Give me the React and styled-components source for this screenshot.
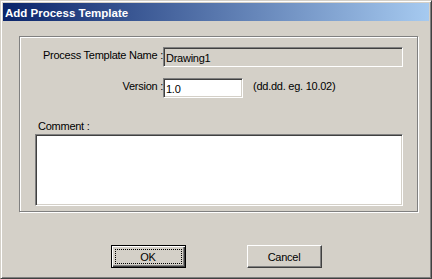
import React from "react";
import styled, { createGlobalStyle, css } from "styled-components";

const GlobalStyle = createGlobalStyle`
  html, body {
    margin: 0;
    padding: 0;
    background: #d4d0c8;
  }
  body {
    font-family: "Liberation Sans", Arial, sans-serif;
    font-size: 11px;
    letter-spacing: -0.25px;
    color: #000;
  }
`;

const sunken = css`
  box-sizing: border-box;
  border: 1px solid;
  border-color: #808080 #fff #fff #808080;
  box-shadow: inset 1px 1px #404040, inset -1px -1px #d4d0c8;
  outline: none;
  margin: 0;
  font-family: "Liberation Sans", Arial, sans-serif;
  font-size: 11px;
  letter-spacing: -0.25px;
  color: #000;
`;

const Window = styled.div`
  box-sizing: border-box;
  width: 432px;
  height: 279px;
  padding: 2px;
  background: #d4d0c8;
  border: 1px solid;
  border-color: #d4d0c8 #404040 #404040 #d4d0c8;
  box-shadow: inset 1px 1px #fff, inset -1px -1px #808080;
  display: flex;
  flex-direction: column;
`;

const TitleBar = styled.div`
  height: 18px;
  box-sizing: border-box;
  padding: 2px 0 0 2px;
  line-height: 16px;
  background: linear-gradient(to right, #0a246a, #a6caf0);
  color: #fff;
  font-weight: bold;
  font-size: 11.5px;
  letter-spacing: 0;
  white-space: nowrap;
`;

const Body = styled.div`
  padding: 15px 0 0 16px;
  display: flex;
  flex-direction: column;
`;

const GroupBox = styled.div`
  box-sizing: border-box;
  width: 399px;
  height: 176px;
  border: 1px solid #808080;
  box-shadow: inset 1px 1px #fff, 1px 1px #fff;
  padding: 10px 14px 5px 15px;
  display: flex;
  flex-direction: column;
`;

const Row = styled.div`
  display: flex;
  align-items: flex-start;
  height: 20px;
  margin-top: ${(p) => p.$gap || 0}px;
`;

const Label = styled.div`
  width: 128px;
  flex: none;
  text-align: right;
  padding-top: 2px;
  line-height: 13px;
  white-space: nowrap;
`;

const Field = styled.input`
  ${sunken};
  width: ${(p) => p.$width}px;
  height: 20px;
  padding: 1px 0 0 2px;
  line-height: 13px;
  background: ${(p) => (p.readOnly ? "#d4d0c8" : "#fff")};
`;

const Hint = styled.div`
  margin-left: 10px;
  padding-top: 2px;
  line-height: 13px;
  white-space: nowrap;
`;

const CommentLabel = styled.div`
  margin-top: 22px;
  margin-bottom: 1px;
  padding-left: 3px;
  line-height: 13px;
`;

const CommentBox = styled.textarea`
  ${sunken};
  width: 368px;
  height: 72px;
  padding: 2px;
  resize: none;
  background: #fff;
`;

const Buttons = styled.div`
  display: flex;
  justify-content: center;
  gap: 61px;
  margin-top: 33px;
  padding-right: 16px;
`;

const Button = styled.button`
  position: relative;
  box-sizing: border-box;
  width: 75px;
  height: 23px;
  margin: 0;
  padding: 0;
  background: #d4d0c8;
  font-family: "Liberation Sans", Arial, sans-serif;
  font-size: 11px;
  letter-spacing: -0.25px;
  color: #000;
  border: 1px solid;
  border-color: #fff #404040 #404040 #fff;
  box-shadow: inset -1px -1px #808080, inset 1px 1px #d4d0c8;
  outline: none;

  ${(p) =>
    p.$default &&
    css`
      border-color: #000;
      box-shadow: inset 1px 1px #fff, inset -1px -1px #404040,
        inset -2px -2px #808080;

      &::after {
        content: "";
        position: absolute;
        inset: 3px;
        border: 1px dotted #000;
      }
    `}
`;

export default function App() {
  return (
    <>
      <GlobalStyle />
      <Window>
        <TitleBar>Add Process Template</TitleBar>
        <Body>
          <GroupBox>
            <Row>
              <Label>Process Template Name :</Label>
              <Field $width={240} readOnly defaultValue="Drawing1" />
            </Row>
            <Row $gap={11}>
              <Label>Version :</Label>
              <Field $width={80} defaultValue="1.0" />
              <Hint>(dd.dd. eg. 10.02)</Hint>
            </Row>
            <CommentLabel>Comment :</CommentLabel>
            <CommentBox defaultValue="" />
          </GroupBox>
          <Buttons>
            <Button $default>OK</Button>
            <Button>Cancel</Button>
          </Buttons>
        </Body>
      </Window>
    </>
  );
}
